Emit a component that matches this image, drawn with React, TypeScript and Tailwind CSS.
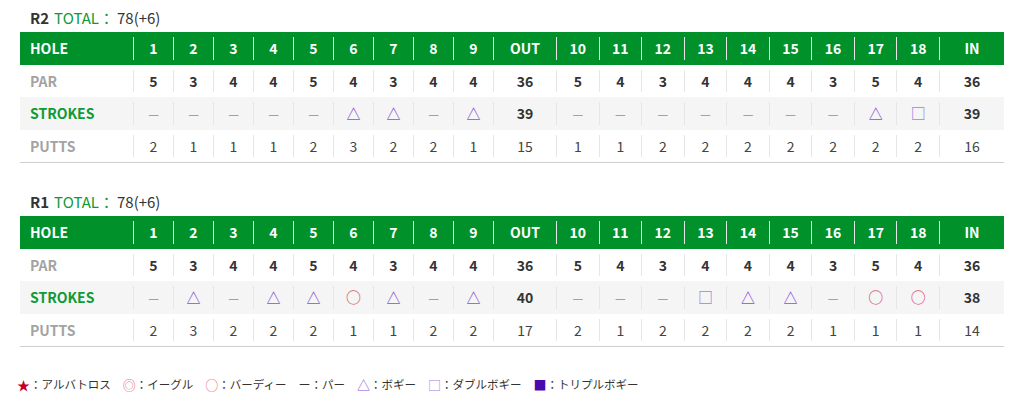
import React from "react";

type Mark = "-" | "b" | "d" | "r";

interface Round {
  name: string;
  total: string;
  strokes: Mark[];
  out: number;
  in: number;
  putts: number[];
}

const PAR = [5, 3, 4, 4, 5, 4, 3, 4, 4, 5, 4, 3, 4, 4, 4, 3, 5, 4];

const ROUNDS: Round[] = [
  {
    name: "R2",
    total: "78(+6)",
    strokes: ["-", "-", "-", "-", "-", "b", "b", "-", "b", "-", "-", "-", "-", "-", "-", "-", "b", "d"],
    out: 39,
    in: 39,
    putts: [2, 1, 1, 1, 2, 3, 2, 2, 1, 1, 1, 2, 2, 2, 2, 2, 2, 2],
  },
  {
    name: "R1",
    total: "78(+6)",
    strokes: ["-", "b", "-", "b", "b", "r", "b", "-", "b", "-", "-", "-", "d", "b", "b", "-", "r", "r"],
    out: 40,
    in: 38,
    putts: [2, 3, 2, 2, 2, 1, 1, 2, 2, 2, 1, 2, 2, 2, 2, 1, 1, 1],
  },
];

const GRID = "grid grid-cols-[113px_repeat(9,40px)_63px_repeat(9,1fr)_65px]";

const sum = (a: number[]) => a.reduce((s, n) => s + n, 0);

const MarkGlyph = ({ m }: { m: Mark }) => {
  if (m === "b") return <span className="text-[14px] font-bold text-[#8b4fd9]">△</span>;
  if (m === "d") return <span className="text-[15px] font-bold text-[#a47de2]">□</span>;
  if (m === "r") return <span className="text-[15px] font-bold text-[#e2616f]">○</span>;
  return <span className="text-[12px] font-normal text-[#8f8f8f]">—</span>;
};

const Cell = ({ children, className = "" }: { children: React.ReactNode; className?: string }) => (
  <div className={`my-[5px] border-l border-[#e6e6e6] flex items-center justify-center ${className}`}>
    {children}
  </div>
);

function Scorecard({ round }: { round: Round }) {
  const cols = (render: (i: number) => React.ReactNode, outVal: React.ReactNode, inVal: React.ReactNode, cls: string) => {
    const cells: React.ReactNode[] = [];
    for (let i = 0; i < 9; i++) cells.push(<Cell key={i} className={cls}>{render(i)}</Cell>);
    cells.push(<Cell key="out" className={cls}>{outVal}</Cell>);
    for (let i = 9; i < 18; i++) cells.push(<Cell key={i} className={cls}>{render(i)}</Cell>);
    cells.push(<Cell key="in" className={cls}>{inVal}</Cell>);
    return cells;
  };

  return (
    <div>
      <div className="pl-[30px] h-[24px] flex items-center text-[15px] text-[#333]">
        <span className="font-bold">{round.name}</span>
        <span className="ml-[5px] text-[#109a34]">TOTAL：</span>
        <span className="ml-[3px]">{round.total}</span>
      </div>
      <div className="mt-[2px] mx-[20px] border-b border-[#cfcfcf]">
        <div className={`${GRID} h-[33px] bg-[#00912a] text-white font-bold text-[14px]`}>
          <div className="pl-[10px] flex items-center">HOLE</div>
          {cols(
            (i) => i + 1,
            "OUT",
            "IN",
            "border-[#3aa857]"
          )}
        </div>
        <div className={`${GRID} h-[32px] text-[14px]`}>
          <div className="pl-[10px] flex items-center font-bold text-[#a3a3a3]">PAR</div>
          {cols((i) => PAR[i], sum(PAR.slice(0, 9)), sum(PAR.slice(9)), "font-bold text-[#333]")}
        </div>
        <div className={`${GRID} h-[33px] bg-[#f5f5f5] text-[14px]`}>
          <div className="pl-[10px] flex items-center font-bold text-[#109a34]">STROKES</div>
          {cols((i) => <MarkGlyph m={round.strokes[i]} />, round.out, round.in, "font-bold text-[#333]")}
        </div>
        <div className={`${GRID} h-[32px] text-[14px]`}>
          <div className="pl-[10px] flex items-center font-bold text-[#a3a3a3]">PUTTS</div>
          {cols(
            (i) => round.putts[i],
            sum(round.putts.slice(0, 9)),
            sum(round.putts.slice(9)),
            "text-[#444]"
          )}
        </div>
      </div>
    </div>
  );
}

const LEGEND: { sym: React.ReactNode; label: string }[] = [
  { sym: <span className="text-[#c4001f] text-[13px]">★</span>, label: "アルバトロス" },
  { sym: <span className="text-[#e2717f] text-[13px]">◎</span>, label: "イーグル" },
  { sym: <span className="text-[#e2717f] text-[13px]">○</span>, label: "バーディー" },
  { sym: <span className="text-[#333] text-[12px]">ー</span>, label: "パー" },
  { sym: <span className="text-[#8b4fd9] text-[13px]">△</span>, label: "ボギー" },
  { sym: <span className="text-[#a47de2] text-[13px]">□</span>, label: "ダブルボギー" },
  { sym: <span className="text-[#4a0ab0] text-[13px]">■</span>, label: "トリプルボギー" },
];

export default function App() {
  return (
    <div
      className="w-[1024px] h-[415px] bg-white pt-[6px]"
      style={{ fontFamily: '"Noto Sans CJK JP", "Noto Sans", sans-serif' }}
    >
      <Scorecard round={ROUNDS[0]} />
      <div className="mt-[27px]">
        <Scorecard round={ROUNDS[1]} />
      </div>
      <div className="mt-[28px] pl-[17px] flex items-center gap-[12px] text-[11.5px] text-[#333]">
        {LEGEND.map((l) => (
          <div key={l.label} className="flex items-center">
            {l.sym}
            <span>：{l.label}</span>
          </div>
        ))}
      </div>
    </div>
  );
}
